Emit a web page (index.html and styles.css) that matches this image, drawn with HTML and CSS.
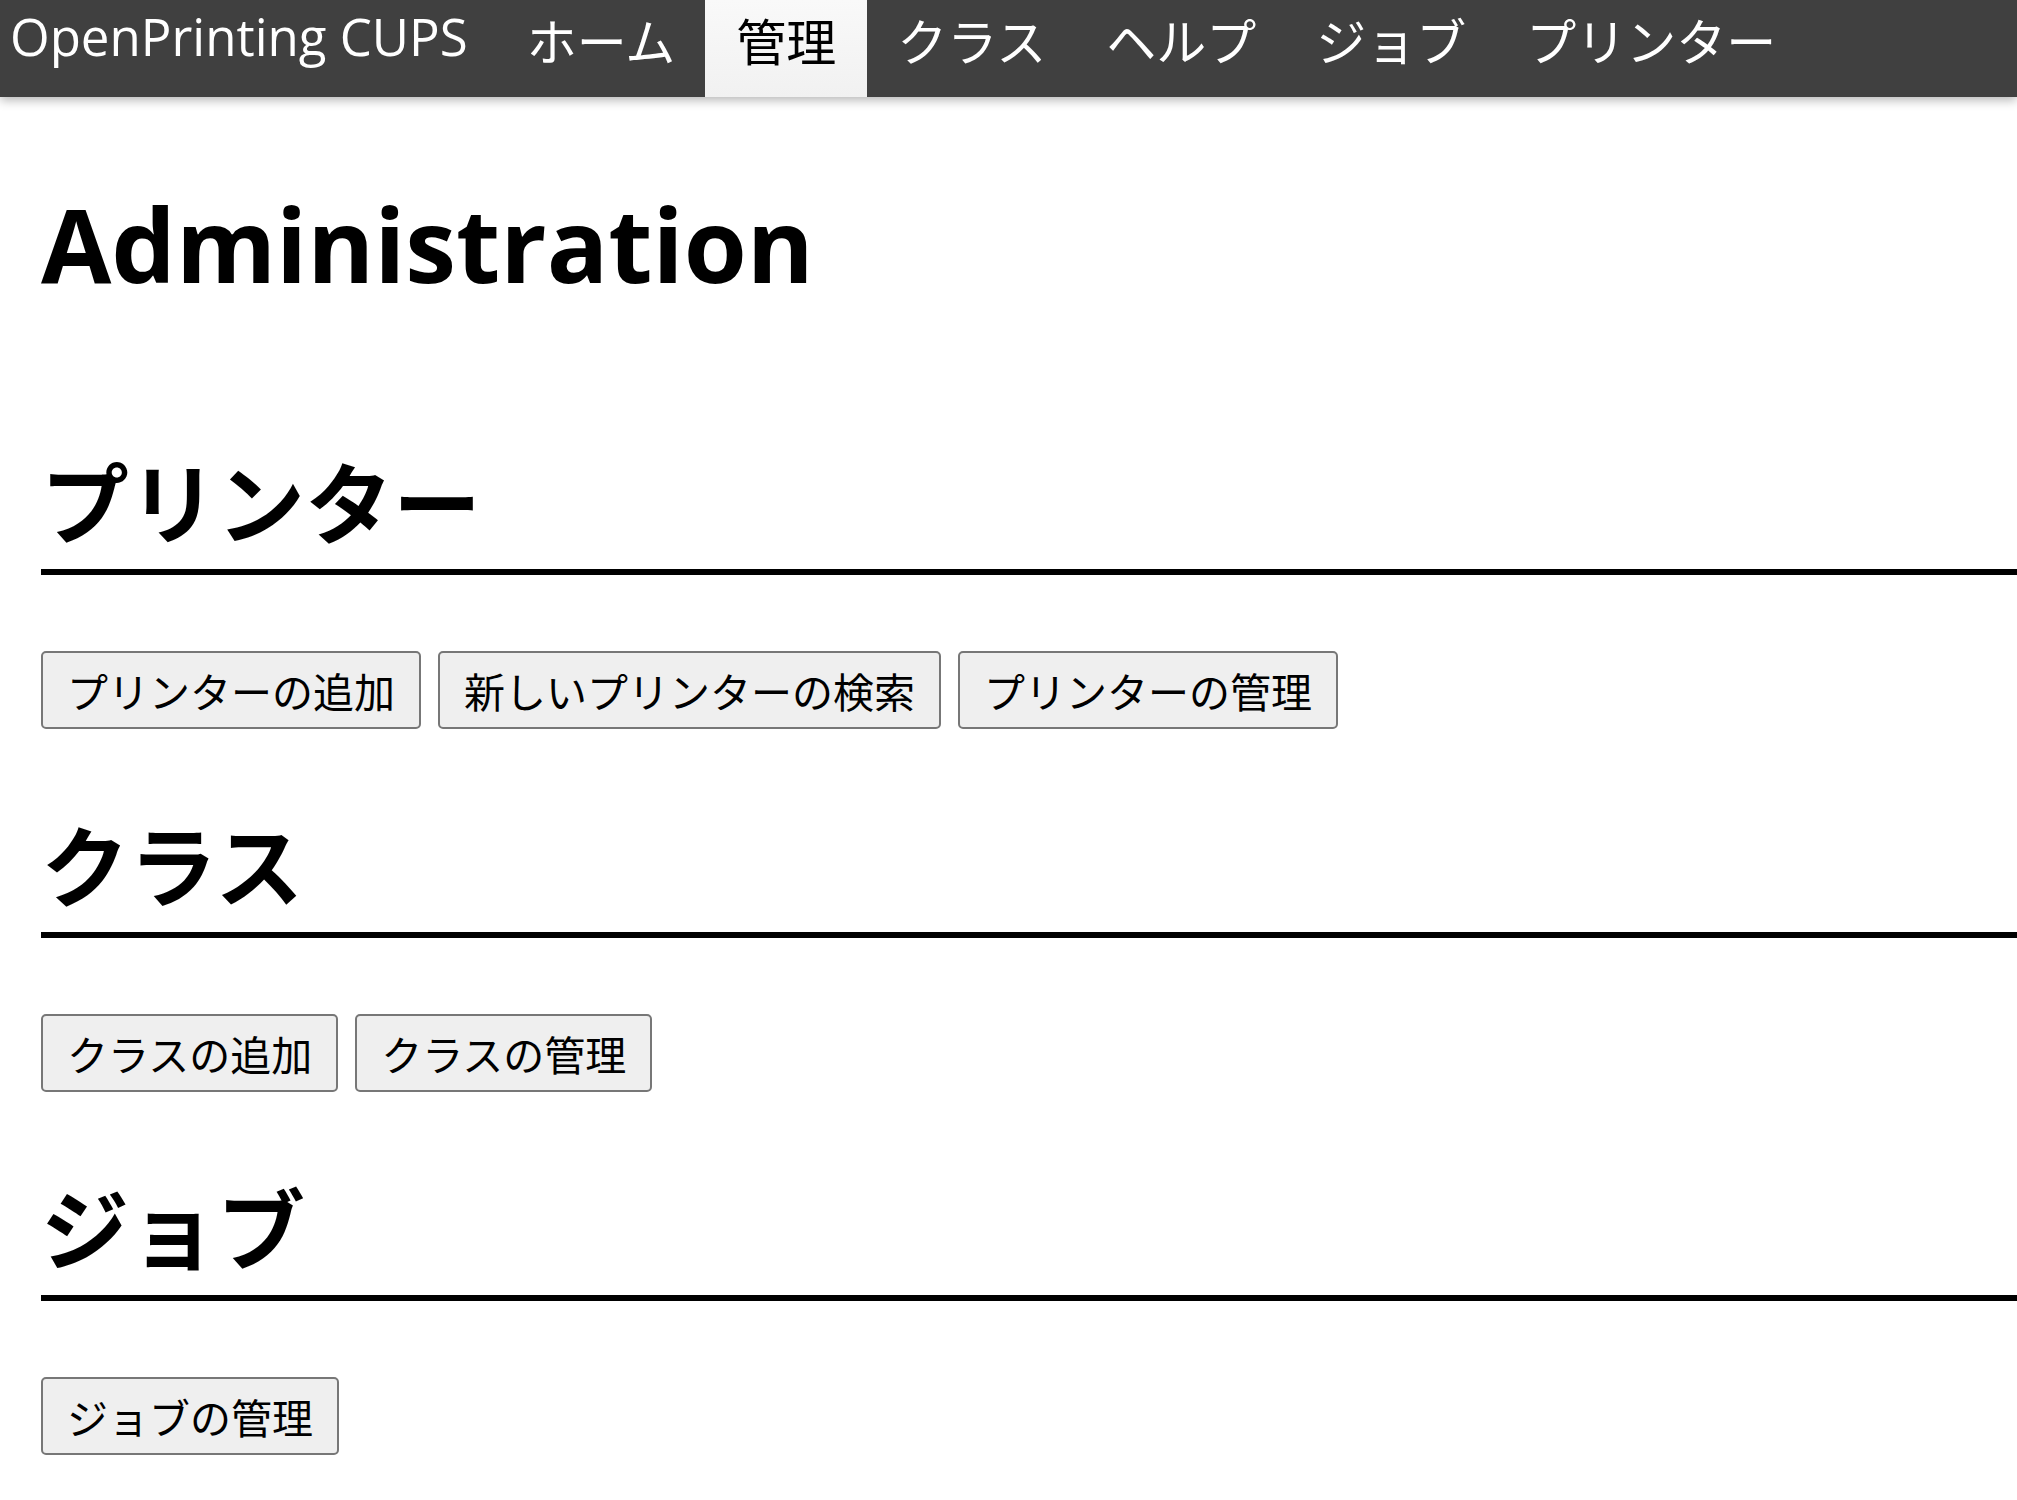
FILE: index.html
```html
<!DOCTYPE html>
<html lang="ja">
<head>
<meta charset="utf-8">
<title>管理 - CUPS</title>
<link rel="stylesheet" href="styles.css">
</head>
<body>
<header class="header">
  <nav class="nav">
    <a class="brand" href="#">OpenPrinting CUPS</a>
    <a class="nav-item" href="#">ホーム</a>
    <a class="nav-item active" href="#">管理</a>
    <a class="nav-item" href="#">クラス</a>
    <a class="nav-item" href="#">ヘルプ</a>
    <a class="nav-item" href="#">ジョブ</a>
    <a class="nav-item" href="#">プリンター</a>
  </nav>
</header>
<main class="content">
  <h1 class="title">Administration</h1>
  <section class="group">
    <h2 class="group-title">プリンター</h2>
    <div class="actions">
      <button class="btn">プリンターの追加</button>
      <button class="btn">新しいプリンターの検索</button>
      <button class="btn">プリンターの管理</button>
    </div>
  </section>
  <section class="group">
    <h2 class="group-title">クラス</h2>
    <div class="actions">
      <button class="btn">クラスの追加</button>
      <button class="btn">クラスの管理</button>
    </div>
  </section>
  <section class="group">
    <h2 class="group-title">ジョブ</h2>
    <div class="actions">
      <button class="btn">ジョブの管理</button>
    </div>
  </section>
</main>
</body>
</html>
```

FILE: styles.css
```css
html, body {
  margin: 0;
  padding: 0;
  background: #ffffff;
  color: #000000;
  font-family: "Open Sans", "Noto Sans CJK JP", sans-serif;
}

.header {
  background: #404040;
  box-shadow: 0 3px 10px rgba(0, 0, 0, 0.3);
  position: relative;
}

.nav {
  display: flex;
  align-items: stretch;
  height: 97px;
}

.brand {
  display: flex;
  align-items: center;
  padding: 0 29px 26px 10px;
  color: #ffffff;
  text-decoration: none;
  font-family: "Open Sans", sans-serif;
  font-size: 51px;
  white-space: nowrap;
}

.nav-item {
  display: flex;
  align-items: center;
  padding: 0 30px 20px 30px;
  color: #ffffff;
  text-decoration: none;
  font-family: "Noto Sans CJK JP", sans-serif;
  font-size: 50px;
  white-space: nowrap;
}

.nav-item.active {
  background: linear-gradient(#f9f9f9, #f1f1f1);
  color: #000000;
  padding: 0 31px 20px 31px;
}

.content {
  padding: 0 0 40px 41px;
}

.title {
  margin: 86px 0 0 0;
  font-family: "Open Sans", sans-serif;
  font-weight: 700;
  font-size: 102px;
  line-height: 1.2;
}

.group {
  margin-top: 139px;
}

.group + .group {
  margin-top: 78px;
}

.group-title {
  margin: 0;
  font-family: "Noto Sans CJK JP", sans-serif;
  font-weight: 700;
  font-size: 88px;
  line-height: 110px;
  padding-bottom: 15px;
  border-bottom: 6px solid #000000;
}

.actions {
  display: flex;
  gap: 17px;
  margin-top: 76px;
}

.btn {
  height: 78px;
  padding: 0 24px;
  border: 2px solid #777777;
  border-radius: 5px;
  background: #efefef;
  color: #000000;
  font-family: "Noto Sans CJK JP", sans-serif;
  font-size: 41px;
  line-height: 1;
}
```
